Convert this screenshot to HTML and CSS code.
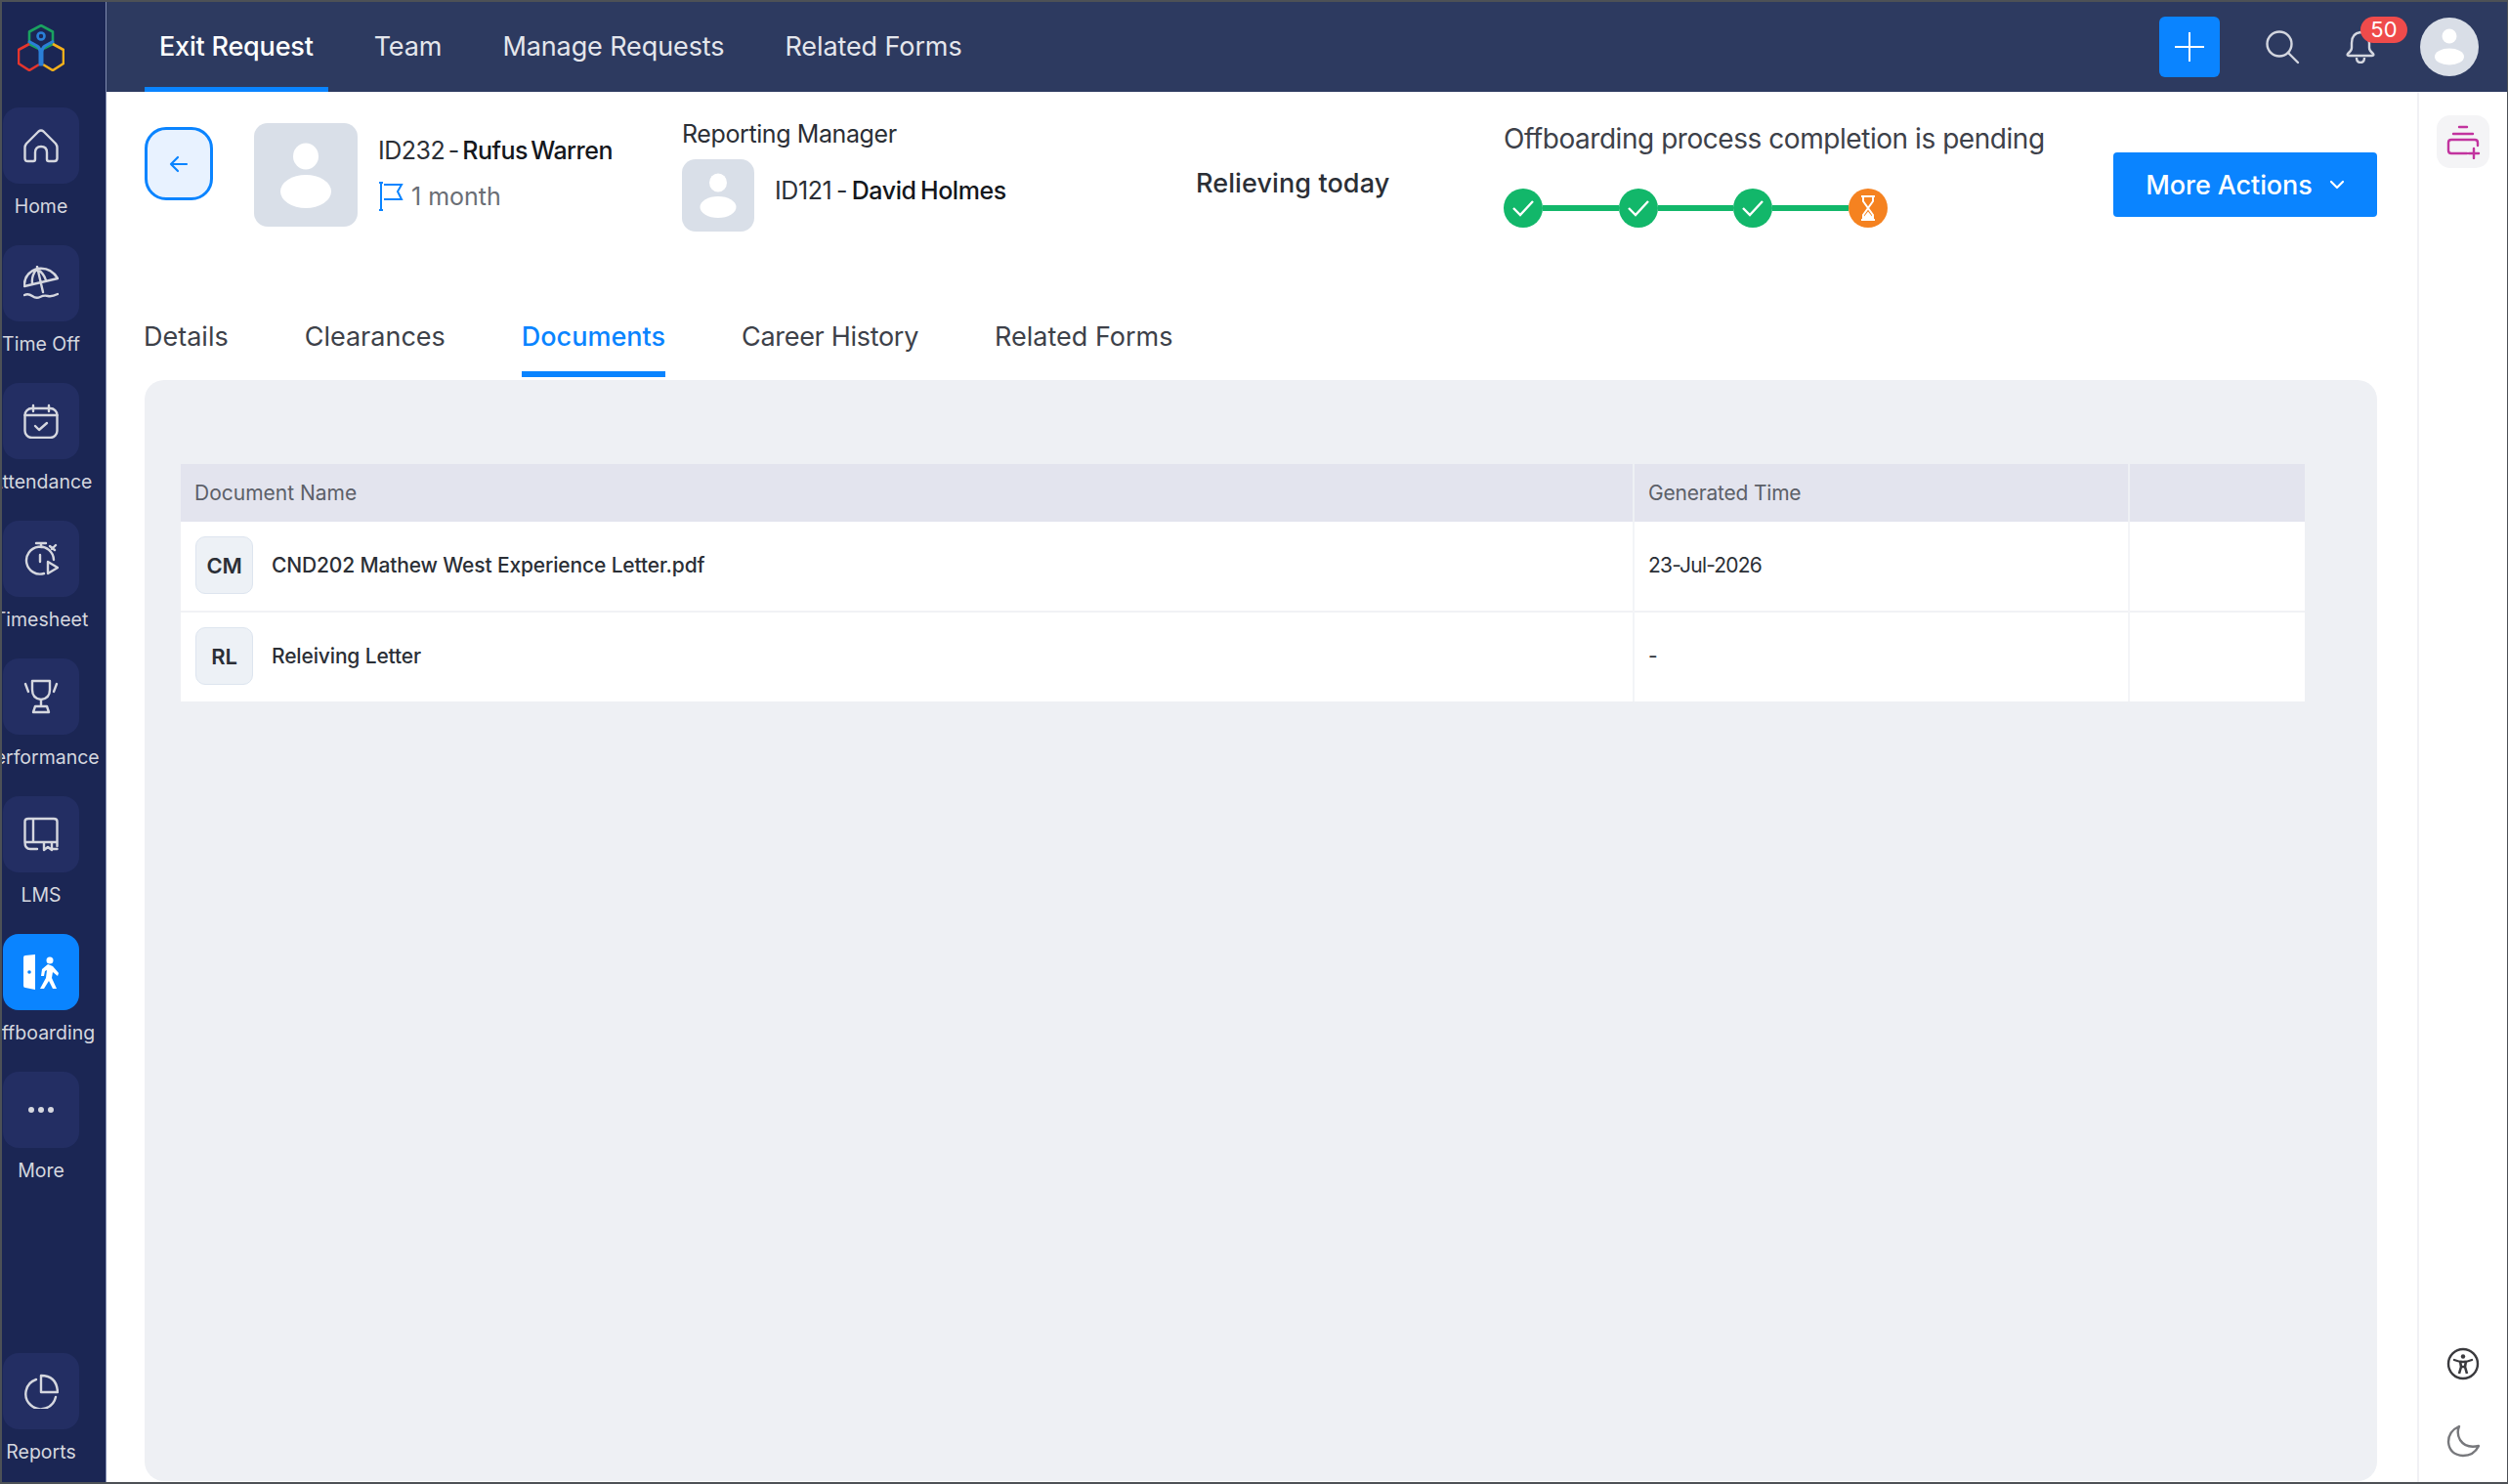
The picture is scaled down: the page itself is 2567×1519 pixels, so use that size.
FILE: index.html
```html
<!DOCTYPE html>
<html lang="en">
<head>
  <meta charset="UTF-8">
  <title>Exit Request</title>
  <link rel="stylesheet" href="styles.css">
</head>
<body>
<div class="app">

  <!-- Left sidebar -->
  <aside class="sidebar">
    <div class="logo">
      <svg width="48" height="48" viewBox="0 0 48 48" fill="none" stroke-width="2.600" stroke-linejoin="round">
        <path d="M24 1 36 7.500 36 20 24 26 12 20 12 7.500Z" stroke="#1aa260"/>
        <path d="M12 20 1 26V40L12 47 22 41" stroke="#e5352d"/>
        <path d="M36 20 47 26V40L36 47 26 41" stroke="#f4b01b"/>
        <circle cx="24" cy="12" r="3.500" stroke="#2a7fd8"/>
        <path d="M11 17 20 22Q23 24 23 28V41H25V28Q25 24 28 22L37 17" stroke="#2a7fd8" stroke-width="3"/>
      </svg>
    </div>
    <nav class="side-nav">
      <a class="side-item">
        <span class="side-tile">
          <svg class="side-icon" viewBox="0 0 36 36"><path d="M3 16 15.500 3.500Q18 1.500 20.500 3.500L33 16Q34.500 18 34.500 20V31Q34.500 34 31.500 34H26Q24 34 24 32V25Q24 19 18 19 12 19 12 25V32Q12 34 10 34H4.500Q1.500 34 1.500 31V20Q1.500 18 3 16Z"/></svg>
        </span>
        <span class="side-label">Home</span>
      </a>
      <a class="side-item">
        <span class="side-tile">
          <svg class="side-icon" viewBox="0 0 36 36"><path d="M1 21Q0 8 14 3 28 1 35 13ZM14 3Q8 10 9 18M14 3Q21 8 23 15M14 1 20 27M1 30Q5 28 9 31T17 32 25 31 35 29"/></svg>
        </span>
        <span class="side-label">Time Off</span>
      </a>
      <a class="side-item">
        <span class="side-tile">
          <svg class="side-icon" viewBox="0 0 36 36"><rect x="1.500" y="5" width="33" height="30" rx="7"/><path d="M10 2V8M26 2V8M1.500 12H34.500M12 23 16 27 24 20"/></svg>
        </span>
        <span class="side-label">Attendance</span>
      </a>
      <a class="side-item">
        <span class="side-tile">
          <svg class="side-icon" viewBox="0 0 36 36"><path d="M13 2H23M18 2V6M29 8 33 4M27 5 32 9M31 19A14 14 0 1 0 21 33M17 14V21"/><path d="M25 21 35 27 25 33Z"/></svg>
        </span>
        <span class="side-label">Timesheet</span>
      </a>
      <a class="side-item">
        <span class="side-tile">
          <svg class="side-icon" viewBox="0 0 36 36"><path d="M9 2H27V11Q27 20 18 21 9 20 9 11ZM18 21V28M12 28H24L26 34H10ZM2 5 5 13M34 5 31 13"/></svg>
        </span>
        <span class="side-label">Performance</span>
      </a>
      <a class="side-item">
        <span class="side-tile">
          <svg class="side-icon" viewBox="0 0 36 36"><path d="M1.500 26V5Q1.500 2 5 2H31Q34.500 2 34.500 5V30M1.500 26Q1.500 33 7 33H14M1.500 26H34.500M10 2V26M21 26V34L25 31 29 34V26M29 33H34.500"/></svg>
        </span>
        <span class="side-label">LMS</span>
      </a>
      <a class="side-item side-item-active">
        <span class="side-tile">
          <svg class="side-icon-fill" viewBox="0 0 36 36"><path d="M0 3Q0 1 2 1L12 0V36L2 34Q0 34 0 32Z"/><circle cx="6" cy="18" r="1.800" fill="#0a84ff"/><circle cx="27" cy="6" r="3.500"/><path d="M25 10 19 15 18 22H21L22 17 24 16 23 24 17 35H21L26 27 30 35H34L29 24 30 18 35 22 36 19 30 12Z"/></svg>
        </span>
        <span class="side-label">Offboarding</span>
      </a>
      <a class="side-item">
        <span class="side-tile">
          <svg class="side-icon-fill" viewBox="0 0 36 36"><circle cx="8" cy="18" r="3"/><circle cx="18" cy="18" r="3"/><circle cx="28" cy="18" r="3"/></svg>
        </span>
        <span class="side-label">More</span>
      </a>
    </nav>
    <a class="side-item side-item-bottom">
      <span class="side-tile">
        <svg class="side-icon" viewBox="0 0 36 36"><path d="M13 6A15.500 15.500 0 1 0 33 24"/><path d="M18 2Q34 2 35 19H18Z"/></svg>
      </span>
      <span class="side-label">Reports</span>
    </a>
  </aside>

  <div class="main">
    <!-- Top bar -->
    <header class="topbar">
      <nav class="top-nav">
        <a class="top-link top-link-active">Exit Request</a>
        <a class="top-link">Team</a>
        <a class="top-link">Manage Requests</a>
        <a class="top-link">Related Forms</a>
      </nav>
      <div class="top-actions">
        <button class="add-btn">
          <svg width="32" height="32" viewBox="0 0 32 32" stroke="#fff" stroke-width="2"><path d="M16 1V31M1 16H31"/></svg>
        </button>
        <svg class="search-icon" width="36" height="36" viewBox="0 0 36 36" fill="none" stroke="#d3d6df" stroke-width="2.400" stroke-linecap="round"><circle cx="15" cy="15" r="12.500"/><path d="M24 24 34 34"/></svg>
        <div class="bell">
          <svg width="30" height="34" viewBox="0 0 30 34" fill="none" stroke="#d3d6df" stroke-width="2.400" stroke-linejoin="round"><path d="M15 2Q6 3 6 13V18Q6 21 2 24Q1 26 3 26H27Q29 26 28 24 24 21 24 18V13Q24 3 15 2ZM11 28Q11 33 15 33T19 28"/></svg>
          <span class="bell-count">50</span>
        </div>
        <div class="top-avatar">
          <svg width="60" height="60" viewBox="0 0 60 60" fill="#fff"><circle cx="30" cy="19" r="7.500"/><ellipse cx="30" cy="40" rx="15" ry="8.500"/></svg>
        </div>
      </div>
    </header>

    <div class="body-row">
      <section class="content">
        <!-- Employee summary -->
        <div class="head">
          <div class="emp">
            <button class="back-btn">
              <svg width="20" height="20" viewBox="0 0 20 20" fill="none" stroke="#0a84ff" stroke-width="2.200" stroke-linecap="round" stroke-linejoin="round"><path d="M18 10H2M9 3 2 10 9 17"/></svg>
            </button>
            <div class="avatar avatar-large">
              <svg width="106" height="106" viewBox="0 0 106 106" fill="#fff"><ellipse cx="53" cy="34" rx="13" ry="13.500"/><ellipse cx="53" cy="70" rx="26" ry="17"/></svg>
            </div>
            <div class="emp-text">
              <div class="person-name">ID232 - <b>Rufus Warren</b></div>
              <div class="tenure">
                <svg width="26" height="30" viewBox="0 0 26 30" fill="none" stroke="#0a84ff" stroke-width="2"><path d="M3 1V29M1 1H5M1 29H5M6 3H24L20 10 24 18H6"/></svg>
                1 month
              </div>
            </div>
          </div>
          <div class="mgr">
            <div class="mgr-title">Reporting Manager</div>
            <div class="mgr-row">
              <div class="avatar avatar-small">
                <svg width="74" height="74" viewBox="0 0 74 74" fill="#fff"><ellipse cx="37" cy="24" rx="9" ry="9.500"/><ellipse cx="37" cy="49" rx="18.500" ry="11"/></svg>
              </div>
              <div class="person-name">ID121 - <b>David Holmes</b></div>
            </div>
          </div>
          <div class="relieving">Relieving today</div>
          <div class="progress">
            <div class="progress-title">Offboarding process completion is pending</div>
            <div class="steps">
              <span class="step"><svg width="24" height="20" viewBox="0 0 24 20" fill="none" stroke="#fff" stroke-width="2.400"><path d="M2 10 9 17 22 3"/></svg></span>
              <span class="step-line"></span>
              <span class="step"><svg width="24" height="20" viewBox="0 0 24 20" fill="none" stroke="#fff" stroke-width="2.400"><path d="M2 10 9 17 22 3"/></svg></span>
              <span class="step-line"></span>
              <span class="step"><svg width="24" height="20" viewBox="0 0 24 20" fill="none" stroke="#fff" stroke-width="2.400"><path d="M2 10 9 17 22 3"/></svg></span>
              <span class="step-line"></span>
              <span class="step step-pending"><svg width="16" height="26" viewBox="0 0 16 26" fill="none" stroke="#fff" stroke-width="2"><path d="M1 1H15M1 25H15M3 1V6L13 20V25M13 1V6L3 20V25"/><path d="M4 23 8 18 12 23Z" fill="#fff"/></svg></span>
            </div>
          </div>
          <button class="more-btn">
            More Actions
            <svg width="16" height="10" viewBox="0 0 16 10" fill="none" stroke="#fff" stroke-width="2.200" stroke-linecap="round" stroke-linejoin="round"><path d="M2 2 8 8 14 2"/></svg>
          </button>
        </div>

        <!-- Tabs -->
        <div class="tabs">
          <a class="tab">Details</a>
          <a class="tab">Clearances</a>
          <a class="tab tab-active">Documents</a>
          <a class="tab tab-tight">Career History</a>
          <a class="tab">Related Forms</a>
        </div>

        <div class="panel">
          <table class="doc-table">
            <colgroup>
              <col class="col-name">
              <col class="col-time">
              <col>
            </colgroup>
            <thead>
              <tr>
                <th>Document Name</th>
                <th class="th-tight">Generated Time</th>
                <th></th>
              </tr>
            </thead>
            <tbody>
              <tr>
                <td>
                  <div class="doc-cell"><span class="doc-badge">CM</span>CND202 Mathew West Experience Letter.pdf</div>
                </td>
                <td class="date-cell">23-Jul-2026</td>
                <td></td>
              </tr>
              <tr>
                <td>
                  <div class="doc-cell"><span class="doc-badge">RL</span>Releiving Letter</div>
                </td>
                <td class="date-cell">-</td>
                <td></td>
              </tr>
            </tbody>
          </table>
        </div>
      </section>

      <!-- Right rail -->
      <aside class="rail">
        <div class="rail-tile">
          <svg width="36" height="36" viewBox="0 0 36 36" fill="none" stroke="#c2349f" stroke-width="2.400" stroke-linecap="round"><path d="M14 3H22M8 10H28M22 30H6Q3 30 3 27V19Q3 16 6 16H30Q33 16 33 19V22M29 25V35M24 30H34"/></svg>
        </div>
        <div class="rail-bottom">
          <svg width="34" height="34" viewBox="0 0 34 34" fill="none" stroke="#3a3a3e" stroke-width="2.400"><circle cx="17" cy="17" r="15"/><circle cx="17" cy="9.500" r="2.200" fill="#3a3a3e" stroke="none"/><path d="M8 13Q13 15 17 15T26 13" stroke-linecap="round"/><path d="M14 14 15 20 13 27M20 14 19 20 21 27M15 20H19" stroke-width="2.600"/></svg>
          <svg width="34" height="34" viewBox="0 0 34 34" fill="none" stroke="#77787c" stroke-width="2.400" stroke-linejoin="round"><path d="M13 2Q2 7 2 18 3 31 17 32 28 32 33 22 20 25 14 16 10 9 13 2Z"/></svg>
        </div>
      </aside>
    </div>
  </div>
</div>
</body>
</html>
```

FILE: styles.css
```css
* {
  box-sizing: border-box;
}
html, body {
  height: 100%;
}
body {
  margin: 0;
  font-family: Inter, "Noto Sans", sans-serif;
  color: #2b2f36;
  background-color: #fff;
}
button {
  font-family: inherit;
  border: none;
  padding: 0;
}
.app {
  display: flex;
  height: 100vh;
  border: solid #4d5156;
  border-width: 2px 1px 2px 2px;
}

/* Left sidebar */
.sidebar {
  display: flex;
  flex-direction: column;
  flex: 0 0 107px;
  padding-bottom: 10px;
  background-color: #1b2654;
  border-right: 1px solid #7f8aaf;
  overflow: hidden;
}
.logo {
  display: flex;
  height: 108px;
  padding: 23px 0 0 16px;
}
.side-nav {
  display: flex;
  flex-direction: column;
  gap: 63px;
}
.side-item {
  display: flex;
  flex-direction: column;
  align-items: center;
  gap: 11px;
  width: 78px;
  margin-left: 1px;
  height: 78px;
}
.side-item-bottom {
  margin-top: auto;
  height: 122px;
}
.side-tile {
  display: flex;
  flex: 0 0 78px;
  align-items: center;
  justify-content: center;
  width: 78px;
  background-color: #232e63;
  border-radius: 16px;
}
.side-item-active .side-tile {
  background-color: #0a84ff;
}
.side-icon {
  width: 36px;
  height: 36px;
  fill: none;
  stroke: #d5d7df;
  stroke-width: 2.400;
  stroke-linecap: round;
  stroke-linejoin: round;
}
.side-icon-fill {
  width: 36px;
  height: 36px;
  fill: #fff;
}
.side-item:last-child .side-icon-fill {
  fill: #d5d7df;
}
.side-label {
  font-size: 19.500px;
  line-height: 24px;
  white-space: nowrap;
  color: #d5d7df;
}

.main {
  display: flex;
  flex-direction: column;
  flex: 1;
  min-width: 0;
}

/* Top bar */
.topbar {
  display: flex;
  flex: 0 0 92px;
  justify-content: space-between;
  padding: 0 29px 0 39px;
  background-color: #2d3a60;
}
.top-nav {
  display: flex;
  gap: 32px;
}
.top-link {
  display: flex;
  align-items: center;
  padding: 3px 15px 0;
  font-size: 27px;
  letter-spacing: -0.1px;
  color: #e4e6ec;
  border-bottom: 5px solid transparent;
}
.top-link-active {
  font-weight: 500;
  letter-spacing: -0.2px;
  color: #fff;
  border-bottom-color: #0a84ff;
}
.top-actions {
  display: flex;
  align-items: center;
}
.add-btn {
  display: flex;
  align-items: center;
  justify-content: center;
  width: 62px;
  height: 62px;
  background-color: #0a84ff;
  border-radius: 6px;
}
.search-icon {
  margin: 0 47px 0 46px;
}
.bell {
  position: relative;
  width: 30px;
  height: 34px;
  margin-right: 46px;
}
.bell-count {
  position: absolute;
  top: -14px;
  left: 15px;
  width: 48px;
  height: 27px;
  font-size: 22px;
  line-height: 27px;
  text-align: center;
  color: #fff;
  background-color: #ef4b4b;
  border-radius: 14px;
}
.top-avatar {
  width: 60px;
  height: 60px;
  background-color: #d9dee7;
  border-radius: 50%;
}

.body-row {
  display: flex;
  flex: 1;
  min-height: 0;
}
.content {
  display: flex;
  flex-direction: column;
  flex: 1;
  min-width: 0;
}

/* Employee summary */
.head {
  display: flex;
  align-items: flex-start;
  flex: 0 0 212px;
  padding: 32px 0 0 39px;
}
.emp {
  display: flex;
  flex: 0 0 550px;
}
.back-btn {
  display: flex;
  align-items: center;
  justify-content: center;
  width: 70px;
  height: 75px;
  margin: 4px 42px 0 0;
  background-color: #e8f2ff;
  border: 3.500px solid #0a84ff;
  border-radius: 22px;
}
.avatar {
  background-color: #d9dfe8;
  border-radius: 14px;
}
.avatar-large {
  width: 106px;
  height: 106px;
}
.avatar-small {
  width: 74px;
  height: 74px;
}
.emp-text {
  margin-left: 21px;
  padding-top: 12px;
}
.person-name {
  font-size: 25px;
  line-height: 32px;
  letter-spacing: -0.5px;
  word-spacing: -3px;
  color: #2b2f36;
}
.person-name b {
  font-weight: 500;
  color: #14171c;
}
.tenure {
  display: flex;
  align-items: center;
  gap: 8px;
  margin-top: 16px;
  font-size: 25px;
  color: #6a6e75;
}
.mgr {
  flex: 0 0 526px;
}
.mgr-title {
  font-size: 25px;
  line-height: 32px;
  letter-spacing: -0.4px;
  margin-top: -5px;
}
.mgr-row {
  display: flex;
  align-items: center;
  gap: 21px;
  margin-top: 10px;
}
.mgr-row .person-name {
  margin-top: -10px;
  letter-spacing: -0.4px;
  word-spacing: -2px;
}
.relieving {
  flex: 0 0 315px;
  margin-top: 44px;
  font-size: 27px;
  line-height: 36px;
  font-weight: 500;
  letter-spacing: 0.1px;
  color: #2b2f36;
}
.progress {
  flex: 0 0 624px;
}
.progress-title {
  margin-top: -2px;
  font-size: 28px;
  line-height: 36px;
  letter-spacing: -0.45px;
  color: #3d4149;
}
.steps {
  display: flex;
  align-items: center;
  margin-top: 33px;
}
.step {
  display: flex;
  flex: 0 0 40px;
  align-items: center;
  justify-content: center;
  height: 40px;
  background-color: #12b76a;
  border-radius: 50%;
}
.step-pending {
  background-color: #f58220;
}
.step-line {
  flex: 0 0 77.500px;
  height: 6px;
  background-color: #12b76a;
}
.more-btn {
  display: flex;
  align-items: center;
  justify-content: center;
  gap: 17px;
  flex: 0 0 270px;
  height: 66px;
  margin-top: 30px;
  font-size: 27px;
  font-weight: 500;
  letter-spacing: -0.1px;
  color: #fff;
  background-color: #0a84ff;
  border-radius: 4px;
}

/* Tabs */
.tabs {
  display: flex;
  flex: 0 0 80px;
  gap: 78px;
  padding-left: 38px;
}
.tab {
  display: flex;
  align-items: center;
  padding-top: 3px;
  font-size: 27px;
  color: #3d4149;
  border-bottom: 6px solid transparent;
}
.tab-tight {
  letter-spacing: -0.3px;
}
.tab-active {
  font-weight: 500;
  color: #0a84ff;
  border-bottom-color: #0a84ff;
}

/* Documents panel */
.panel {
  flex: 1;
  margin: 3px 41px 1px 39px;
  padding: 86px 73px 0 37px;
  background-color: #eef0f4;
  border-radius: 20px;
}
.doc-table {
  width: 2174px;
  border-collapse: collapse;
  table-layout: fixed;
  background-color: #fff;
  font-size: 21px;
}
.col-name {
  width: 1487px;
}
.col-time {
  width: 507px;
}
.doc-table th {
  height: 59px;
  padding: 0 14px;
  font-size: 21px;
  font-weight: 400;
  text-align: left;
  color: #5c6068;
  background-color: #e3e4ee;
  border-left: 2px solid #eef0f4;
}
.doc-table .th-tight {
  letter-spacing: -0.2px;
}
.doc-table th:first-child,
.doc-table td:first-child {
  border-left: none;
}
.doc-table td {
  height: 92px;
  padding: 0 15px;
  color: #2b2f36;
  border-left: 2px solid #f3f4f7;
  border-top: 2px solid #f1f2f5;
}
.doc-table .date-cell {
  padding-left: 14px;
  padding-bottom: 2px;
  letter-spacing: -0.8px;
}
.doc-table tbody tr:first-child td {
  border-top: none;
}
.doc-cell {
  display: flex;
  align-items: center;
  gap: 19px;
  padding-bottom: 2px;
  font-weight: 500;
  letter-spacing: -0.15px;
}
.doc-badge {
  display: flex;
  align-items: center;
  justify-content: center;
  width: 59px;
  height: 59px;
  font-size: 22px;
  font-weight: 600;
  background-color: #edf1f6;
  border: 1px solid #dde5ef;
  border-radius: 10px;
}

/* Right rail */
.rail {
  display: flex;
  flex-direction: column;
  align-items: center;
  flex: 0 0 92px;
  padding-top: 24px;
  border-left: 2px solid #f1f1f4;
}
.rail-tile {
  display: flex;
  align-items: center;
  justify-content: center;
  width: 54px;
  height: 54px;
  background-color: #f4f4f6;
  border-radius: 14px;
}
.rail-bottom {
  display: flex;
  flex-direction: column;
  gap: 45px;
  margin-top: auto;
  padding-bottom: 25px;
}
```
